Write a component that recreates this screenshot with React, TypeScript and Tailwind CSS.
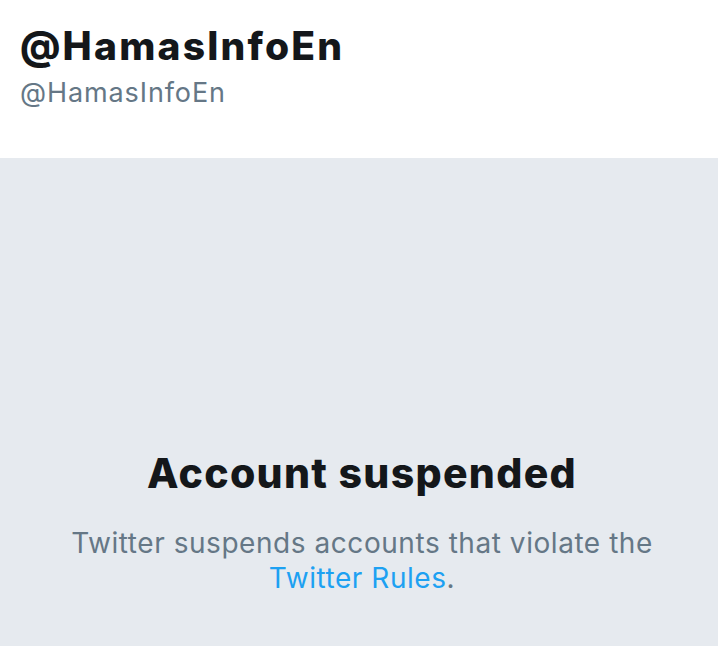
export default function App() {
  return (
    <div className="flex h-[646px] w-[718px] flex-col bg-[#e6eaef] font-['Inter',sans-serif]">
      <header className="h-[158px] bg-white px-5 pt-[22px]">
        <h1 className="text-[39px] font-extrabold leading-[48px] tracking-[2.2px] text-[#14171a]">@HamasInfoEn</h1>
        <p className="mt-[7px] text-[27px] leading-[32px] tracking-[0.9px] text-[#657786]">@HamasInfoEn</p>
      </header>
      <main className="flex flex-1 flex-col items-center pl-[22px] pr-[16px] pt-[291px] text-center">
        <h2 className="text-[41px] font-extrabold leading-[48px] tracking-[1.3px] text-[#14171a]">Account suspended</h2>
        <p className="mt-[29px] text-[28px] leading-[35px] tracking-[0.55px] text-[#657786]">
          Twitter suspends accounts that violate the
          <br />
          <a href="#" className="text-[#1da1f2]">Twitter Rules</a>.
        </p>
      </main>
    </div>
  );
}
